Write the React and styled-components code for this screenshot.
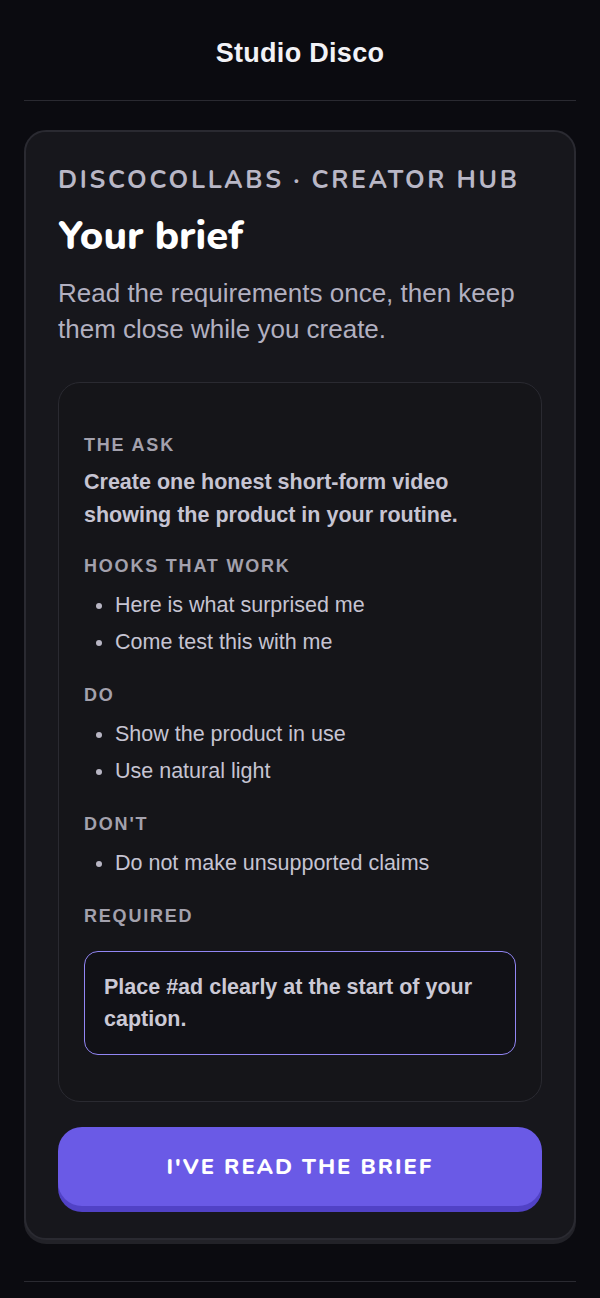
import React from 'react'
import styled, { createGlobalStyle } from 'styled-components'

const GlobalStyle = createGlobalStyle`
    html, body {
        margin: 0;
        padding: 0;
        background: #0b0b10;
    }
    body {
        font-family: "Liberation Sans", Arial, sans-serif;
        color: #c6c4d2;
    }
    * { box-sizing: border-box; }
`

const Page = styled.div`
    width: 600px;
    min-height: 1298px;
    padding: 0 24px;
    background: #0b0b10;
`
const Header = styled.header`
    padding: 38px 0 32px;
    border-bottom: 1px solid #2a2a31;
    text-align: center;
`
const Brand = styled.h1`
    margin: 0;
    font-family: "Liberation Sans", Arial, sans-serif;
    font-size: 27px;
    line-height: 30px;
    font-weight: 700;
    color: #f2f2f6;
    letter-spacing: 0.3px;
`
const Card = styled.main`
    margin-top: 29px;
    background: #17171c;
    border: 2px solid #2a2a31;
    border-radius: 22px;
    padding: 32px 32px 26px;
    box-shadow: 0 4px 0 #222228;
`
const Kicker = styled.div`
    font-family: Nunito, Lato, sans-serif;
    font-weight: 700;
    font-size: 25px;
    line-height: 32px;
    letter-spacing: 2.7px;
    color: #b9b7c6;
    text-transform: uppercase;
`
const Title = styled.h2`
    margin: 16px 0 0;
    font-family: Nunito, Lato, sans-serif;
    font-weight: 800;
    font-size: 40px;
    line-height: 48px;
    color: #ffffff;
`
const Lead = styled.p`
    margin: 15px 0 0;
    font-size: 26px;
    line-height: 36px;
    color: #b2b0c0;
`
const Brief = styled.section`
    margin-top: 35px;
    background: #151519;
    border: 1px solid #2a2a31;
    border-radius: 22px;
    padding: 50px 25px 46px;
`
const Block = styled.div`
    & + & { margin-top: 22px; }
`
const Label = styled.h3`
    margin: 0 0 9px;
    font-size: 18px;
    line-height: 24px;
    font-weight: 700;
    letter-spacing: 0.1em;
    text-transform: uppercase;
    color: #a3a1ad;
`
const Ask = styled.p`
    margin: 2px 0 0;
    font-size: 21.5px;
    line-height: 33px;
    font-weight: 700;
    color: #c6c4d2;
`
const List = styled.ul`
    margin: 0;
    padding-left: 31px;
    font-size: 21.5px;
    line-height: 37px;
    color: #c6c4d2;
    li::marker { font-size: 20px; color: #b8b6c4; }
`
const Callout = styled.div`
    margin-top: 23px;
    border: 1.5px solid #9286f4;
    border-radius: 14px;
    background: #111116;
    padding: 19px;
    font-size: 21.5px;
    line-height: 32px;
    font-weight: 700;
    color: #cbc9d5;
`
const Button = styled.button`
    display: block;
    width: 100%;
    margin-top: 25px;
    margin-bottom: 6px;
    height: 79px;
    border: none;
    border-radius: 24px;
    background: #6a5ae6;
    box-shadow: 0 6px 0 #5142c6;
    color: #ffffff;
    font-family: Nunito, Lato, sans-serif;
    font-weight: 800;
    font-size: 22px;
    letter-spacing: 0.09em;
    text-transform: uppercase;
    cursor: pointer;
`
const Footer = styled.footer`
    margin-top: 41px;
    border-top: 1px solid #2a2a31;
    height: 16px;
`

const sections = [
    { label: 'Hooks that work', items: ['Here is what surprised me', 'Come test this with me'] },
    { label: 'Do', items: ['Show the product in use', 'Use natural light'] },
    { label: "Don't", items: ['Do not make unsupported claims'] },
]

export default function App() {
    return (
        <Page>
            <GlobalStyle />
            <Header>
                <Brand>Studio Disco</Brand>
            </Header>
            <Card>
                <Kicker>DiscoCollabs · Creator Hub</Kicker>
                <Title>Your brief</Title>
                <Lead>Read the requirements once, then keep them close while you create.</Lead>
                <Brief>
                    <Block>
                        <Label>The ask</Label>
                        <Ask>Create one honest short-form video showing the product in your routine.</Ask>
                    </Block>
                    {sections.map(s => (
                        <Block key={s.label}>
                            <Label>{s.label}</Label>
                            <List>
                                {s.items.map(i => <li key={i}>{i}</li>)}
                            </List>
                        </Block>
                    ))}
                    <Block>
                        <Label>Required</Label>
                        <Callout>Place #ad clearly at the start of your caption.</Callout>
                    </Block>
                </Brief>
                <Button>I've read the brief</Button>
            </Card>
            <Footer />
        </Page>
    )
}
